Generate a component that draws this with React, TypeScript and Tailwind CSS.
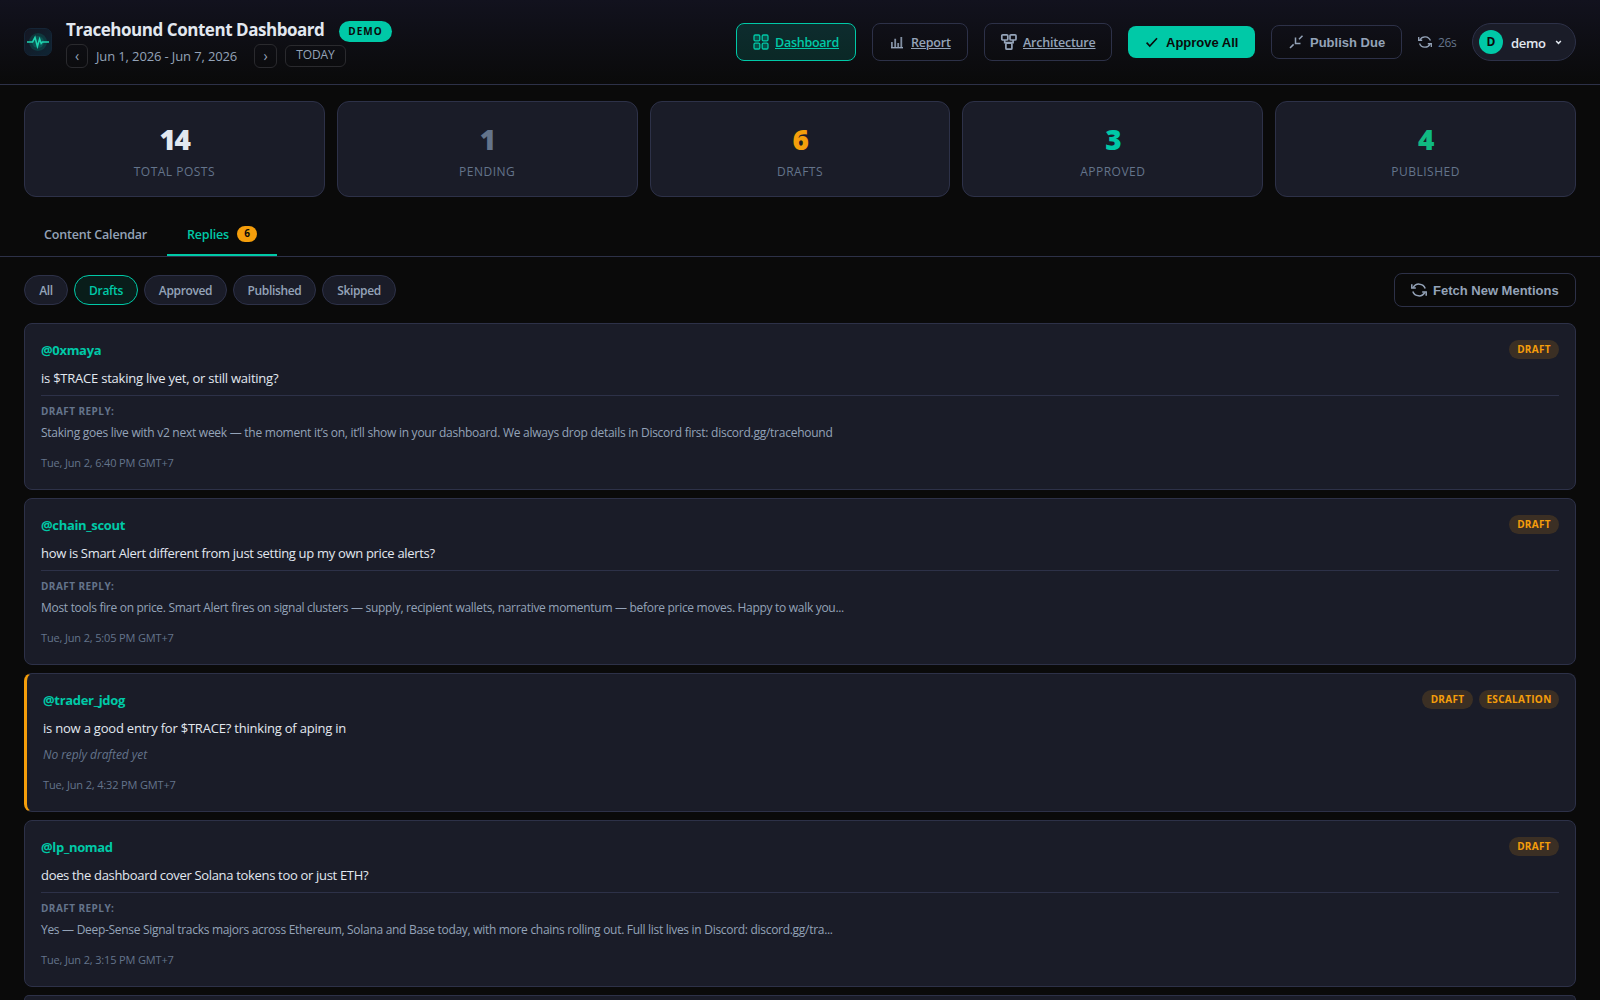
import React, { useState } from 'react';

interface Reply {
  id: string;
  handle: string;
  message: string;
  messageTracking: string;
  draft?: string;
  draftTracking?: string;
  time: string;
  escalation?: boolean;
}

const replies: Reply[] = [
  {
    id: '1',
    handle: '@0xmaya',
    message: 'is $TRACE staking live yet, or still waiting?',
    messageTracking: 'tracking-[-0.23px]',
    draft:
      'Staking goes live with v2 next week — the moment it’s on, it’ll show in your dashboard. We always drop details in Discord first: discord.gg/tracehound',
    draftTracking: 'tracking-[-0.26px]',
    time: 'Tue, Jun 2, 6:40 PM GMT+7',
  },
  {
    id: '2',
    handle: '@chain_scout',
    message: 'how is Smart Alert different from just setting up my own price alerts?',
    messageTracking: 'tracking-[-0.32px]',
    draft:
      'Most tools fire on price. Smart Alert fires on signal clusters — supply, recipient wallets, narrative momentum — before price moves. Happy to walk you...',
    draftTracking: 'tracking-[-0.3px]',
    time: 'Tue, Jun 2, 5:05 PM GMT+7',
  },
  {
    id: '3',
    handle: '@trader_jdog',
    message: 'is now a good entry for $TRACE? thinking of aping in',
    messageTracking: 'tracking-[-0.21px]',
    time: 'Tue, Jun 2, 4:32 PM GMT+7',
    escalation: true,
  },
  {
    id: '4',
    handle: '@lp_nomad',
    message: 'does the dashboard cover Solana tokens too or just ETH?',
    messageTracking: 'tracking-[-0.32px]',
    draft:
      'Yes — Deep-Sense Signal tracks majors across Ethereum, Solana and Base today, with more chains rolling out. Full list lives in Discord: discord.gg/tra...',
    draftTracking: 'tracking-[-0.295px]',
    time: 'Tue, Jun 2, 3:15 PM GMT+7',
  },
];

const stats = [
  { label: 'TOTAL POSTS', value: 14, color: 'text-[#e2e8f0]' },
  { label: 'PENDING', value: 1, color: 'text-[#64748b]' },
  { label: 'DRAFTS', value: 6, color: 'text-[#f59e0b]' },
  { label: 'APPROVED', value: 3, color: 'text-[#00c9a7]' },
  { label: 'PUBLISHED', value: 4, color: 'text-[#10b981]' },
];

const filters = [
  { name: 'All', width: 'w-[44px]' },
  { name: 'Drafts', width: 'w-[64px]' },
  { name: 'Approved', width: 'w-[83px]' },
  { name: 'Published', width: 'w-[83px]' },
  { name: 'Skipped', width: 'w-[74px]' },
];

const Logo = () => (
  <svg width="28" height="28" viewBox="0 0 28 28" fill="none">
    <defs>
      <linearGradient id="logoBg" x1="0" y1="0" x2="1" y2="1">
        <stop stopColor="#151622" />
        <stop offset="1" stopColor="#0e2635" />
      </linearGradient>
    </defs>
    <rect x="0.5" y="0.5" width="27" height="27" rx="6.5" fill="url(#logoBg)" stroke="#152536" />
    <circle cx="14" cy="14" r="9" fill="#00c9a7" fillOpacity="0.16" />
    <circle cx="14" cy="14" r="6" fill="#00c9a7" fillOpacity="0.2" />
    <path d="M3 14h5.6l2.4-4.6L13.4 18.4l2.2-7.4 1.6 4.4 1.2-1.4H25" stroke="#1fd3b0" strokeWidth="1.6" />
  </svg>
);

const GridIcon = () => (
  <svg width="16" height="16" viewBox="0 0 16 16" fill="currentColor" fillOpacity="0.25" stroke="currentColor" strokeWidth="1.3">
    <rect x="1" y="1" width="5.8" height="5.8" rx="1.2" />
    <rect x="9.2" y="1" width="5.8" height="5.8" rx="1.2" />
    <rect x="1" y="9.2" width="5.8" height="5.8" rx="1.2" />
    <rect x="9.2" y="9.2" width="5.8" height="5.8" rx="1.2" />
  </svg>
);

const BarsIcon = () => (
  <svg width="16" height="16" viewBox="0 0 16 16" fill="currentColor">
    <path d="M2 8h1.8v5H2zM5.3 4.8h1.8V13H5.3zM8.3 9h1.8v4H8.3zM11.4 3h1.8v10h-1.8z" fillOpacity="0.85" />
    <path d="M2 13h12v1.4H2z" />
  </svg>
);

const ArchIcon = () => (
  <svg width="18" height="18" viewBox="0 0 18 18" fill="none" stroke="currentColor" strokeWidth="1.7">
    <rect x="1.8" y="1.8" width="6" height="5.2" rx="1" />
    <rect x="10" y="1.8" width="6" height="5.2" rx="1" />
    <rect x="5.9" y="10.2" width="6" height="6" rx="1" />
    <path d="M4.7 7v2.6h8.4V7" />
  </svg>
);

const RefreshIcon = ({ size }: { size: number }) => (
  <svg width={size} height={size} viewBox="0 0 16 16" fill="none" stroke="currentColor" strokeWidth="1.5">
    <path d="M2.2 5.6A6.6 6.6 0 0 1 14.2 6.4M13.8 10.4A6.6 6.6 0 0 1 1.8 9.6" />
    <path d="M0.8 2.2V6H4.8M15.2 13.8V10H11.2" />
  </svg>
);

const Badge = ({ label, width }: { label: string; width: string }) => (
  <span
    className={`flex h-[19px] items-center justify-center rounded-full bg-[#f59e0b]/15 text-[10px] font-bold tracking-[0.3px] text-[#f59e0b] ${width}`}
  >
    {label}
  </span>
);

const ReplyCard = ({ reply }: { reply: Reply }) => (
  <div
    className={`rounded-lg border border-[#2d3148] bg-[#1a1c28] p-4 ${
      reply.escalation ? 'h-[139px] border-l-3 border-l-[#f59e0b]' : 'h-[167px]'
    }`}
  >
    <div className="flex h-5 items-start justify-between">
      <span className="text-[13px] font-bold leading-[21px] tracking-[-0.32px] text-[#00c9a7]">{reply.handle}</span>
      <div className="flex gap-1.5">
        <Badge label="DRAFT" width={reply.escalation ? 'w-[51px]' : 'w-[50px]'} />
        {reply.escalation && <Badge label="ESCALATION" width="w-20" />}
      </div>
    </div>
    <p className={`mt-2 h-5 whitespace-nowrap text-[13px] leading-5 text-[#e2e8f0] ${reply.messageTracking}`}>{reply.message}</p>
    {reply.draft ? (
      <div className="mt-[7px] border-t border-[#2d3148] pt-[7px]">
        <div className="h-4 text-[10px] font-bold leading-4 tracking-[0.45px] text-[#64748b]">DRAFT REPLY:</div>
        <p className={`mt-[5px] h-[18px] whitespace-nowrap text-xs leading-[18px] text-[#94a3b8] ${reply.draftTracking}`}>
          {reply.draft}
        </p>
      </div>
    ) : (
      <p className="mt-2 h-[18px] text-xs italic leading-[18px] tracking-[-0.06px] text-[#64748b]">No reply drafted yet</p>
    )}
    <div className="mt-3 h-[18px] text-[11px] leading-[18px] tracking-[-0.15px] text-[#64748b]">{reply.time}</div>
  </div>
);

const App: React.FC = () => {
  const [filter, setFilter] = useState('Drafts');

  return (
    <div className="h-screen overflow-hidden bg-[#0a0a0a] font-['Open_Sans','Noto_Sans',sans-serif] text-[#e2e8f0]">
      {/* Header */}
      <header className="flex h-[85px] items-center justify-between border-b border-[#2d3148] bg-linear-to-b from-[#12121e] to-[#0a0a0a] px-6">
        <div className="flex items-center gap-3.5">
          <Logo />
          <div className="pt-[3px]">
            <div className="flex h-[22px] items-center gap-[15px]">
              <h1 className="w-[258px] whitespace-nowrap text-[17px] font-bold leading-[22px] tracking-[-0.46px]">
                Tracehound Content Dashboard
              </h1>
              <span className="mt-[3px] flex h-[21px] w-[53px] items-center justify-center rounded-full bg-[#00c9a7] text-[10px] font-bold tracking-[1px] text-[#0a0a0a]">
                DEMO
              </span>
            </div>
            <div className="mt-[3px] flex h-6 items-center gap-2 text-[#94a3b8]">
              <button className="h-6 w-[22px] rounded-md border border-[#2a2a2e] text-sm leading-none">‹</button>
              <span className="w-[150px] whitespace-nowrap pt-px text-[13px] tracking-[-0.13px]">Jun 1, 2026 - Jun 7, 2026</span>
              <button className="h-6 w-[23px] rounded-md border border-[#2a2a2e] text-sm leading-none">›</button>
              <button className="h-[22px] w-[61px] rounded-md border border-[#2a2a2e] pb-0.5 text-xs leading-none tracking-[-0.1px]">
                TODAY
              </button>
            </div>
          </div>
        </div>

        <div className="flex items-center gap-4 text-[12.5px] font-semibold text-[#94a3b8]">
          <a className="flex h-[38px] w-[120px] items-center gap-1.5 rounded-lg border border-[#00c9a7] bg-[#00c9a7]/15 pl-4 text-[#00c9a7]">
            <GridIcon />
            <span className="pt-0.5 tracking-[-0.25px] underline">Dashboard</span>
          </a>
          <a className="flex h-[38px] w-24 items-center gap-1.5 rounded-lg border border-[#2d3148] pl-4">
            <BarsIcon />
            <span className="pt-0.5 tracking-[-0.2px] underline">Report</span>
          </a>
          <a className="flex h-[38px] w-32 items-center gap-[5px] rounded-lg border border-[#2d3148] pl-[15px]">
            <ArchIcon />
            <span className="pt-0.5 tracking-[-0.22px] underline">Architecture</span>
          </a>
          <button className="flex h-8 w-[127px] items-center gap-2 rounded-lg bg-[#00c9a7] pl-4 font-['Liberation_Sans',sans-serif] text-[13px] font-bold text-[#0a0a0a]">
            <svg width="14" height="14" viewBox="0 0 14 14" fill="none" stroke="currentColor" strokeWidth="1.6">
              <path d="M2.6 7.6 5.8 11 13 3.2" />
            </svg>
            <span className="pt-px">Approve All</span>
          </button>
          <button className="flex h-[34px] w-[131px] items-center gap-1.5 rounded-lg border border-[#2d3148] pl-4 font-['Liberation_Sans',sans-serif] text-[13px] font-bold">
            <svg width="16" height="16" viewBox="0 0 16 16" fill="none" stroke="currentColor" strokeWidth="1.5">
              <path d="M14.5 1.8 11 5.3M7.5 3.5v6h5M5.6 10.4 2 14" />
            </svg>
            <span className="pt-px">Publish Due</span>
          </button>
          <div className="flex w-[38px] items-center gap-1.5 text-xs font-normal tracking-[-0.3px] text-[#64748b]">
            <span className="text-[#94a3b8]">
              <RefreshIcon size={14} />
            </span>
            <span className="pt-px">26s</span>
          </div>
          <div className="flex h-[38px] w-[104px] items-center rounded-full border border-[#2d3148] bg-[#1a1c28] pl-1.5 text-[#e2e8f0]">
            <span className="flex size-6 items-center justify-center rounded-full bg-[#00c9a7] text-xs font-bold text-[#0a0a0a]">D</span>
            <span className="ml-2 w-[34px] pt-[3px] text-[13px] tracking-[-0.3px]">demo</span>
            <svg className="ml-2.5" width="7" height="7" viewBox="0 0 8 8" fill="none" stroke="currentColor" strokeWidth="1.7">
              <path d="M1.3 2.3 4 5 6.7 2.3" />
            </svg>
          </div>
        </div>
      </header>

      {/* Stats */}
      <div className="grid grid-cols-5 gap-3 px-6 pt-4">
        {stats.map((s) => (
          <div key={s.label} className="flex h-24 flex-col items-center rounded-xl border border-[#2d3148] bg-[#1a1c28] pt-[19px]">
            <div className={`h-9 text-[28px] font-extrabold leading-9 tracking-[-1.4px] ${s.color}`}>{s.value}</div>
            <div className="mt-1.5 text-xs font-medium leading-[18px] tracking-[0.5px] text-[#64748b]">{s.label}</div>
          </div>
        ))}
      </div>

      {/* Tabs */}
      <div className="mt-4 flex h-11 border-b border-[#2d3148] px-6 text-[12.5px] font-semibold tracking-[-0.18px]">
        <button className="h-[43px] w-[143px] whitespace-nowrap pt-0.5 text-[#94a3b8]">Content Calendar</button>
        <button className="flex h-[43px] w-[110px] items-center gap-2 border-b-2 border-[#00c9a7] pl-5 text-[#00c9a7]">
          <span className="w-[42px] pt-[3px]">Replies</span>
          <span className="flex h-4 w-5 items-center justify-center rounded-full bg-[#f59e0b] text-[10px] font-bold text-[#0a0a0a]">6</span>
        </button>
      </div>

      {/* Filters */}
      <div className="mt-4 flex h-[34px] items-center justify-between px-6">
        <div className="flex gap-1.5">
          {filters.map((f) => (
            <button
              key={f.name}
              onClick={() => setFilter(f.name)}
              className={`h-[30px] rounded-full border pt-0.5 text-xs font-semibold tracking-[-0.35px] ${f.width} ${
                filter === f.name
                  ? 'border-[#00c9a7] bg-[#00c9a7]/10 text-[#00c9a7]'
                  : 'border-[#2d3148] bg-[#1a1c28] text-[#94a3b8]'
              }`}
            >
              {f.name}
            </button>
          ))}
        </div>
        <button className="flex h-[34px] w-[182px] items-center gap-1.5 rounded-lg border border-[#2d3148] pl-4 font-['Liberation_Sans',sans-serif] text-[13px] font-bold text-[#94a3b8]">
          <RefreshIcon size={16} />
          <span className="pt-px">Fetch New Mentions</span>
        </button>
      </div>

      {/* Replies */}
      <div className="mt-4 flex flex-col gap-2 px-6">
        {replies.map((r) => (
          <ReplyCard key={r.id} reply={r} />
        ))}
        {/* top edge of the next card */}
        <div className="h-[5px] rounded-t-lg border border-b-0 border-[#2d3148] bg-[#1a1c28]" />
      </div>
    </div>
  );
};

export default App;
